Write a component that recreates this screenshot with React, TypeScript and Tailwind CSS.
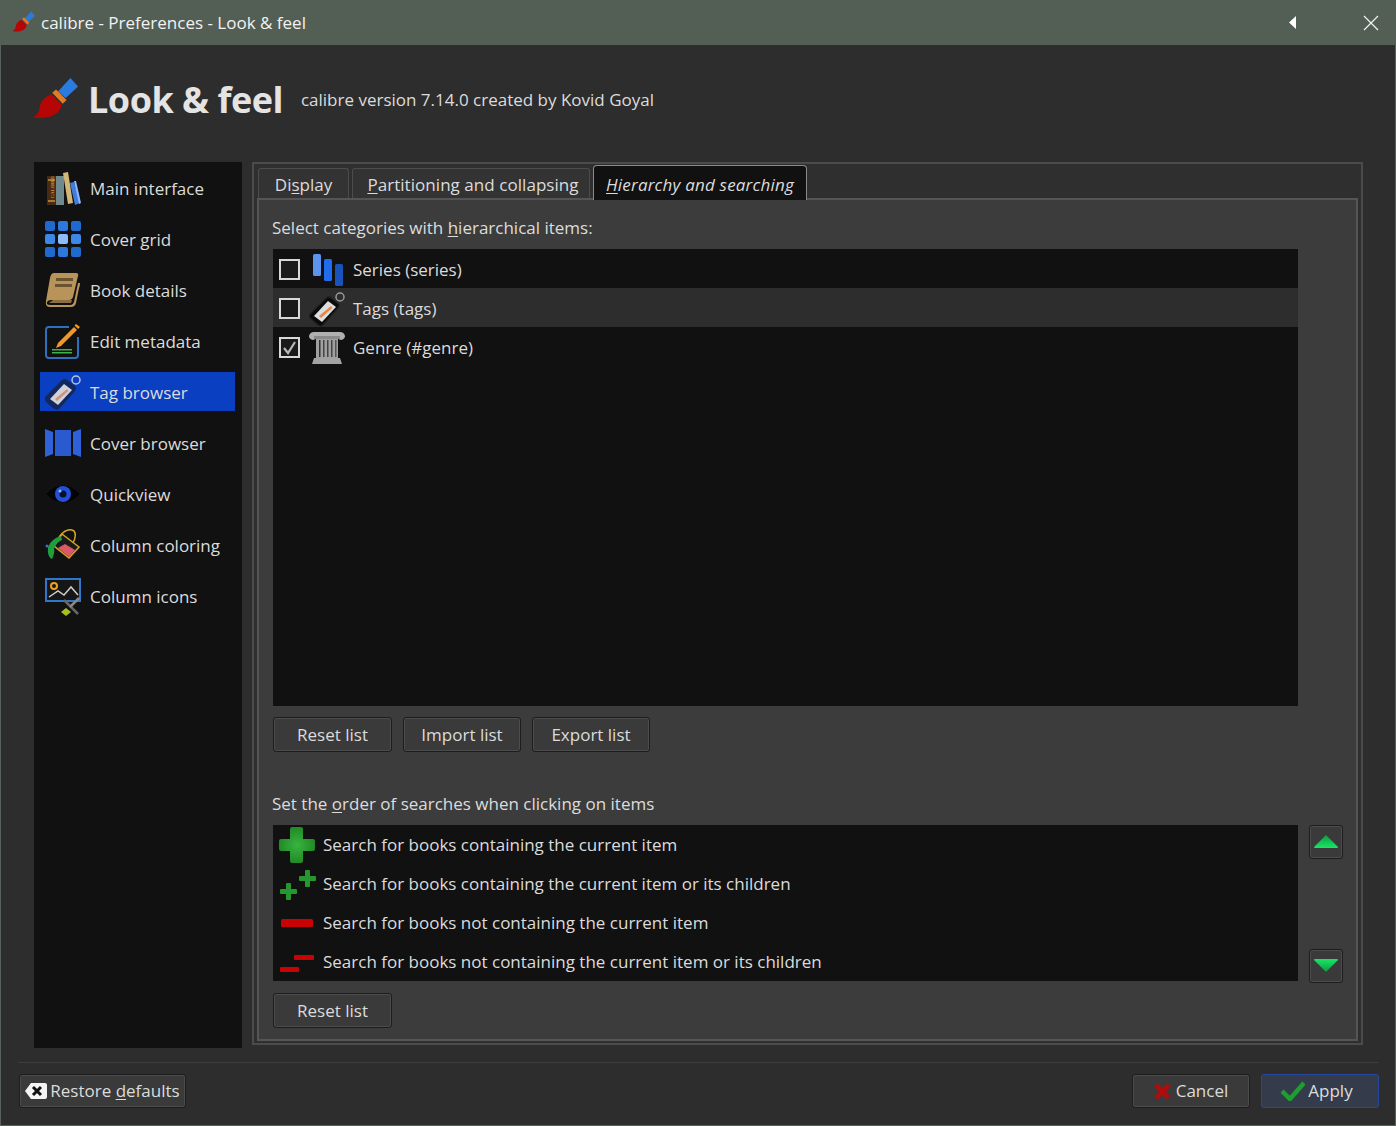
import { ReactNode } from 'react';

const FONT = "font-['Open_Sans','Noto_Sans',sans-serif]";

function Brush({ size }: { size: number }) {
  return (
    <svg width={size} height={size} viewBox="0 0 48 48" className="shrink-0">
      <path d="M25 15 L38 1 L46 10 L33 22Z" fill="#2a7bde" />
      <path d="M19 16.500 L23 13 L34 24 L30 28Z" fill="#e07b28" />
      <path d="M18 18 L29 29 Q27 38 18 41 Q9 44 -1 42 Q6 38 6 30 Q8 22 18 18Z" fill="#b50505" />
    </svg>
  );
}

function MainIcon() {
  return (
    <svg width="36" height="36" viewBox="0 0 36 36">
      <rect x="2" y="6" width="9" height="29" fill="#4a2a14" />
      <rect x="3" y="9" width="7" height="2" fill="#a87a28" />
      <rect x="3" y="30" width="7" height="2" fill="#a87a28" />
      <text x="-28.500" y="8.800" transform="rotate(-90)" fontSize="5" fontFamily="Liberation Serif, serif" fontWeight="700" fill="#d09a38">CALIBRE</text>
      <rect x="11" y="6" width="8" height="29" fill="#6e8a8c" />
      <path d="M18 3 L23 2 L28 33 L23 34Z" fill="#d3b777" />
      <path d="M25 13 L29 12 L35 33 L30 35Z" fill="#3f7be0" />
      <path d="M29 11 L31 11 L36 33 L34 34Z" fill="#8fb6ff" />
    </svg>
  );
}

function GridIcon() {
  const cells = [0, 1, 2, 3, 4, 5, 6, 7, 8];
  const fills = ['#1e6ad0', '#2d78dc', '#1e6ad0', '#3d87e6', '#8ebcf6', '#3d87e6', '#1e6ad0', '#2d78dc', '#1e6ad0'];
  return (
    <svg width="36" height="36" viewBox="0 0 36 36">
      {cells.map((i) => (
        <rect key={i} x={(i % 3) * 13} y={Math.floor(i / 3) * 13} width="10" height="10" rx="2" fill={fills[i]} />
      ))}
    </svg>
  );
}

function BookIcon() {
  return (
    <svg width="36" height="36" viewBox="0 0 36 36">
      <path d="M9 1 H31 Q34 1 33 4 L28 25 Q27 28 24 28 H6 Q3 28 2 30 Q1 33 5 33 H26 Q28 33 29 30 L33 11 L35 11 Q35 14 34 16 L31 31 Q30 35 26 35 H5 Q0 35 1 29 L5 6 Q6 1 9 1Z" fill="#b8945a" />
      <path d="M8 28 H27 L26 31 H4 Z" fill="#8b6f42" />
      <rect x="11" y="6" width="17" height="3" fill="#6b5230" />
      <rect x="10" y="12" width="17" height="3" fill="#6b5230" />
    </svg>
  );
}

function EditIcon() {
  return (
    <svg width="36" height="36" viewBox="0 0 36 36">
      <path d="M24 4 H4 Q1 4 1 7 V32 Q1 35 4 35 H30 Q33 35 33 32 V14" fill="none" stroke="#2f6fc0" strokeWidth="2" />
      <path d="M13 20 L29 4 L32 7 L16 23 L11 25Z" fill="#f0982a" />
      <path d="M31 1 L35 4 L33 6 L29.500 2.500Z" fill="#f0982a" />
      <rect x="7" y="26" width="20" height="1.500" fill="#3fb24a" />
      <rect x="7" y="29" width="20" height="1.500" fill="#3fb24a" />
    </svg>
  );
}

function TagIcon({ blue }: { blue?: boolean }) {
  return (
    <svg width="36" height="36" viewBox="0 0 36 36">
      <circle cx="31" cy="6" r="4" fill="none" stroke={blue ? '#b7c4dc' : '#999'} strokeWidth="1.500" />
      <path d="M21 6 L30 13 Q31 15 29 17 L14 34 Q12 36 9 34 L1 27 Q-1 25 1 23 L17 7 Q19 5 21 6Z" fill={blue ? '#13295e' : '#0a0a0a'} stroke={blue ? '#13295e' : '#222'} strokeWidth="1.500" />
      <path d="M19 10 L27 16 L13 31 L5 25Z" fill={blue ? '#cfd3dc' : '#dedede'} />
      <path d="M10 25 L22 15 L23.500 17 L12 27Z" fill={blue ? '#d4927a' : '#e08a4a'} />
    </svg>
  );
}

function CoverBrowserIcon() {
  return (
    <svg width="36" height="36" viewBox="0 0 36 36">
      <path d="M0 4 L8 7 V29 L0 32Z" fill="#2f62d8" />
      <rect x="10" y="5" width="16" height="26" fill="#2a5ad0" />
      <path d="M36 4 L28 7 V29 L36 32Z" fill="#2f62d8" />
    </svg>
  );
}

function EyeIcon() {
  return (
    <svg width="36" height="36" viewBox="0 0 36 36">
      <path d="M2 18 Q18 2 34 18 Q18 34 2 18Z" fill="#050505" stroke="#000" />
      <circle cx="18" cy="18" r="8" fill="#2350d8" />
      <circle cx="18" cy="18" r="3.500" fill="#07102e" />
      <circle cx="15" cy="15" r="1.500" fill="#9db4f5" />
    </svg>
  );
}

function ColoringIcon() {
  return (
    <svg width="36" height="36" viewBox="0 0 36 36">
      <path d="M14 10 Q22 0 29 4 Q32 8 28 16" fill="none" stroke="#d9a526" strokeWidth="1.500" />
      <path d="M17 7 L34 20 L24 31 L9 19Z" fill="#1a1a1a" stroke="#d9a526" strokeWidth="1.500" />
      <path d="M13 21 L20 17 L30 23 L24 30Z" fill="#d95a66" />
      <path d="M16 9 Q6 12 3 20 Q2 30 7 32 Q10 26 9 21 Q12 15 17 13Z" fill="#1f9e3c" />
      <circle cx="2" cy="19" r="1.500" fill="#3a72c8" />
    </svg>
  );
}

function ColumnIconsIcon() {
  return (
    <svg width="36" height="36" viewBox="0 0 36 36" className="overflow-visible">
      <rect x="1" y="1" width="34" height="22" fill="#161616" stroke="#2f78c9" strokeWidth="2" />
      <circle cx="9" cy="8" r="3" fill="none" stroke="#f0a020" strokeWidth="2" />
      <path d="M4 19 L13 13 L19 17 L26 9 L33 17" fill="none" stroke="#ccc" strokeWidth="1.500" />
      <path d="M19 22 L33 36" stroke="#666" strokeWidth="2.500" />
      <path d="M34 20 L25 29" stroke="#888" strokeWidth="2.500" />
      <path d="M21 30 L26 34 L21 38 L16 34Z" fill="#a5c21c" />
    </svg>
  );
}

function SeriesIcon() {
  return (
    <svg width="32" height="32" viewBox="0 0 32 32">
      <rect x="2" y="0" width="8" height="22" rx="1.500" fill="#5b93ee" />
      <rect x="13" y="5" width="8" height="22" rx="1.500" fill="#1f6cec" />
      <rect x="24" y="10" width="8" height="22" rx="1.500" fill="#1753ba" />
    </svg>
  );
}

function PillarIcon() {
  return (
    <svg width="36" height="34" viewBox="0 0 36 34">
      <path d="M4 9 Q0 8 0 5 Q1 1 5 1 H31 Q35 1 36 5 Q36 8 32 9 Q28 8 29 5 H7 Q8 8 4 9Z" fill="#b0b0b0" />
      <rect x="5" y="5" width="26" height="3" fill="#8a8a8a" />
      <rect x="7" y="8" width="22" height="19" fill="#a0a0a0" />
      <rect x="10" y="9" width="1.500" height="17" fill="#333" />
      <rect x="14" y="9" width="1.500" height="17" fill="#444" />
      <rect x="18" y="9" width="1.500" height="17" fill="#444" />
      <rect x="22" y="9" width="1.500" height="17" fill="#444" />
      <rect x="26" y="9" width="1.500" height="17" fill="#555" />
      <path d="M5 27 H31 L33 33 H3Z" fill="#a3a3a3" />
    </svg>
  );
}

function BigPlus() {
  return (
    <svg width="38" height="36" viewBox="0 0 38 36">
      <defs>
        <radialGradient id="plusg" cx="50%" cy="50%" r="50%">
          <stop offset="0%" stopColor="#38b43e" />
          <stop offset="100%" stopColor="#218a28" />
        </radialGradient>
      </defs>
      <path d="M14 0 H23 Q25 0 25 2 V12 H35 Q37 12 37 14 V22 Q37 24 35 24 H25 V34 Q25 36 23 36 H14 Q12 36 12 34 V24 H3 Q1 24 1 22 V14 Q1 12 3 12 H12 V2 Q12 0 14 0Z" fill="url(#plusg)" />
    </svg>
  );
}

function TwoPlus() {
  return (
    <svg width="38" height="36" viewBox="0 0 38 36">
      <rect x="8" y="17" width="5" height="17" rx="1" fill="#27962e" />
      <rect x="2" y="23" width="17" height="5" rx="1" fill="#27962e" />
      <rect x="27" y="4" width="5" height="17" rx="1" fill="#27962e" />
      <rect x="21" y="10" width="17" height="5" rx="1" fill="#27962e" />
    </svg>
  );
}

function BigMinus() {
  return (
    <svg width="38" height="36" viewBox="0 0 38 36">
      <rect x="3" y="14" width="32" height="8" rx="1.500" fill="#c80303" />
    </svg>
  );
}

function TwoMinus() {
  return (
    <svg width="38" height="36" viewBox="0 0 38 36">
      <rect x="2" y="23" width="19" height="5" rx="1" fill="#c80303" />
      <rect x="16" y="11" width="20" height="5" rx="1" fill="#c80303" />
    </svg>
  );
}

const NAV = [
  { label: 'Main interface', icon: <MainIcon /> },
  { label: 'Cover grid', icon: <GridIcon /> },
  { label: 'Book details', icon: <BookIcon /> },
  { label: 'Edit metadata', icon: <EditIcon /> },
  { label: 'Tag browser', icon: <TagIcon blue />, active: true },
  { label: 'Cover browser', icon: <CoverBrowserIcon /> },
  { label: 'Quickview', icon: <EyeIcon /> },
  { label: 'Column coloring', icon: <ColoringIcon /> },
  { label: 'Column icons', icon: <ColumnIconsIcon /> },
];

const SEARCHES = [
  { label: 'Search for books containing the current item', icon: <BigPlus /> },
  { label: 'Search for books containing the current item or its children', icon: <TwoPlus /> },
  { label: 'Search for books not containing the current item', icon: <BigMinus /> },
  { label: 'Search for books not containing the current item or its children', icon: <TwoMinus /> },
];

function Btn({ children, className }: { children: ReactNode; className: string }) {
  return (
    <button className={`flex items-center justify-center rounded-[3px] border border-[#1d1d1d] bg-[#3a3a3a] shadow-[inset_0_0_0_1px_#4c4c4c] text-[#dcdcdc] ${className}`}>
      {children}
    </button>
  );
}

function Check({ checked }: { checked?: boolean }) {
  return (
    <span className="flex h-[21px] w-[21px] shrink-0 items-center justify-center border-2 border-[#d8d8d8] bg-[#1a1a1a]">
      {checked && (
        <svg width="15" height="15" viewBox="0 0 15 15">
          <path d="M2 8 L6 13 L13 2" fill="none" stroke="#b8b8b8" strokeWidth="2.200" />
        </svg>
      )}
    </span>
  );
}

function ArrowBtn({ up }: { up?: boolean }) {
  return (
    <button className="flex h-[34px] w-[34px] items-center justify-center rounded-[3px] border border-[#1d1d1d] bg-[#3a3a3a] shadow-[inset_0_0_0_1px_#4c4c4c]">
      <svg width="24" height="14" viewBox="0 0 24 14">
        <defs>
          <linearGradient id={up ? 'arrowUp' : 'arrowDown'} x1="0" y1={up ? '1' : '0'} x2="0" y2={up ? '0' : '1'}>
            <stop offset="0%" stopColor="#1be566" />
            <stop offset="100%" stopColor="#0a9c40" />
          </linearGradient>
        </defs>
        <path d={up ? 'M12 0 L24 12 Q24 13 23 13 H1 Q0 13 0 12Z' : 'M0 1 Q0 0 1 0 H23 Q24 0 24 1 L12 13Z'} fill={up ? 'url(#arrowUp)' : 'url(#arrowDown)'} />
      </svg>
    </button>
  );
}

export default function App() {
  return (
    <div className={`flex h-[1126px] w-[1396px] flex-col overflow-hidden bg-[#2d2d2d] text-[17px] leading-[24px] text-[#dcdcdc] ${FONT}`}>
      <div className="flex h-[45px] shrink-0 items-center bg-[#535f55] pl-[13px] pr-[17px] text-[#f2f2f2]">
        <Brush size={23} />
        <span className="ml-[5px] pt-px">calibre - Preferences - Look &amp; feel</span>
        <svg width="8" height="13" viewBox="0 0 8 13" className="ml-auto mr-[66px]">
          <path d="M7 0 V13 L0 6.500Z" fill="#fff" />
        </svg>
        <svg width="16" height="16" viewBox="0 0 16 16">
          <path d="M1 1 L15 15 M15 1 L1 15" stroke="#f2f2f2" strokeWidth="1.200" />
        </svg>
      </div>

      <div className="flex min-h-0 flex-1 flex-col border-x border-b border-[#56625a] pl-[33px] pr-[33px]">
        <div className="flex h-[117px] shrink-0 items-center pb-[7px]">
          <Brush size={46} />
          <span className="ml-[8px] text-[36px] font-bold tracking-[-0.5px] text-[#e4e4e4]">Look &amp; feel</span>
          <span className="ml-[18px]">calibre version 7.14.0 created by Kovid Goyal</span>
        </div>

        <div className="flex h-[887px] shrink-0 items-start">
          <div className="flex h-[886px] w-[208px] shrink-0 flex-col gap-[12px] bg-[#111111] pl-[6px] pr-[7px] pt-[6px]">
            {NAV.map((n) => (
              <div key={n.label} className={`flex h-[39px] items-center ${n.active ? 'bg-[#0b3fc2]' : ''}`}>
                <span className="ml-[5px] flex h-[36px] w-[36px] shrink-0 items-center justify-center">{n.icon}</span>
                <span className="ml-[9px] pt-[2px]">{n.label}</span>
              </div>
            ))}
          </div>

          <div className="ml-[10px] h-[883px] w-[1111px] shrink-0 border-2 border-[#4b4b4b] bg-[#2f2f2f] px-[3px] pb-[3px] pt-[3px]">
            <div className="flex h-[31px] items-end pl-px">
              <div className="flex h-[30px] w-[91px] items-center justify-center rounded-t-[3px] border border-b-0 border-[#4c4c4c] bg-[#333333] pt-[3px]">
                <span>Di<u className="underline-offset-2">s</u>play</span>
              </div>
              <div className="ml-[3px] flex h-[30px] w-[238px] items-center justify-center rounded-t-[3px] border border-b-0 border-[#4c4c4c] bg-[#333333] pl-[4px] pt-[3px]">
                <span className="tracking-[0.05px]"><u className="underline-offset-2">P</u>artitioning and collapsing</span>
              </div>
              <div className="z-10 -mb-[2px] ml-[3px] flex h-[35px] w-[214px] items-center justify-center rounded-t-[4px] border border-b-0 border-[#8a8a8a] bg-[#111111] pt-[3px] italic tracking-[0.2px]">
                <span><u className="underline-offset-2">H</u>ierarchy and searching</span>
              </div>
            </div>

            <div className="flex h-[843px] flex-col border-2 border-[#555555] bg-[#3c3c3c] pl-[13px] pr-[13px]">
              <div className="mt-[16px] h-[24px] leading-[24px]">
                Select categories with <u className="underline-offset-2">h</u>ierarchical items:
              </div>
              <div className="ml-px mt-[9px] h-[457px] w-[1025px] bg-[#111111]">
                <div className="flex h-[39px] items-center pl-[6px] pt-[2px]">
                  <Check />
                  <span className="ml-[9px] flex w-[36px] justify-center"><SeriesIcon /></span>
                  <span className="ml-[8px]">Series (series)</span>
                </div>
                <div className="flex h-[39px] items-center bg-[#2d2d2d] pl-[6px] pt-[2px]">
                  <Check />
                  <span className="ml-[9px] flex w-[36px] justify-center"><TagIcon /></span>
                  <span className="ml-[8px]">Tags (tags)</span>
                </div>
                <div className="flex h-[39px] items-center pl-[6px] pt-[2px]">
                  <Check checked />
                  <span className="ml-[9px] flex w-[36px] justify-center"><PillarIcon /></span>
                  <span className="ml-[8px]">Genre (#genre)</span>
                </div>
              </div>
              <div className="ml-px mt-[11px] flex gap-[11px]">
                <Btn className="h-[35px] w-[119px]">Reset list</Btn>
                <Btn className="h-[35px] w-[118px]">Import list</Btn>
                <Btn className="h-[35px] w-[118px]">Export list</Btn>
              </div>
              <div className="mt-[40px] h-[24px]">
                Set the <u className="underline-offset-2">o</u>rder of searches when clicking on items
              </div>
              <div className="ml-px mt-[9px] flex items-stretch justify-between">
                <div className="h-[156px] w-[1025px] bg-[#111111]">
                  {SEARCHES.map((s) => (
                    <div key={s.label} className="flex h-[39px] items-center pl-[5px]">
                      <span className="flex w-[38px] shrink-0 justify-center">{s.icon}</span>
                      <span className="ml-[7px]">{s.label}</span>
                    </div>
                  ))}
                </div>
                <div className="flex h-[158px] flex-col justify-between">
                  <ArrowBtn up />
                  <ArrowBtn />
                </div>
              </div>
              <div className="ml-px mt-[10px]">
                <Btn className="h-[35px] w-[119px]">Reset list</Btn>
              </div>
            </div>
          </div>
        </div>

        <div className="-ml-[16px] -mr-[17px] mt-[13px] flex h-[47px] shrink-0 items-end justify-between border-t border-[#3c3c3c] pb-[1px]">
          <Btn className="ml-px h-[34px] w-[167px] gap-[3px]">
            <svg width="22" height="16" viewBox="0 0 22 16">
              <path d="M6 0 H20 Q22 0 22 2 V14 Q22 16 20 16 H6 L0 8Z" fill="#f4f4f4" />
              <path d="M8 4 L16 12 M16 4 L8 12" stroke="#111" strokeWidth="3" />
            </svg>
            <span>Restore <u className="underline-offset-2">d</u>efaults</span>
          </Btn>
          <div className="flex gap-[11px]">
            <Btn className="h-[34px] w-[118px] gap-[5px]">
              <svg width="17" height="17" viewBox="0 0 17 17">
                <path d="M2 2 L15 15 M15 2 L2 15" stroke="#b50a0a" strokeWidth="4.500" />
              </svg>
              <span>Cancel</span>
            </Btn>
            <button className="flex h-[34px] w-[118px] items-center justify-center gap-[3px] rounded-[3px] border border-[#2848a0] bg-[#343c4c] pr-[6px] text-[#dcdcdc]">
              <svg width="24" height="20" viewBox="0 0 24 20">
                <path d="M1 10 L9 18 L23 2" fill="none" stroke="#1f9e30" strokeWidth="4.500" />
              </svg>
              <span>Apply</span>
            </button>
          </div>
        </div>
      </div>
    </div>
  );
}
